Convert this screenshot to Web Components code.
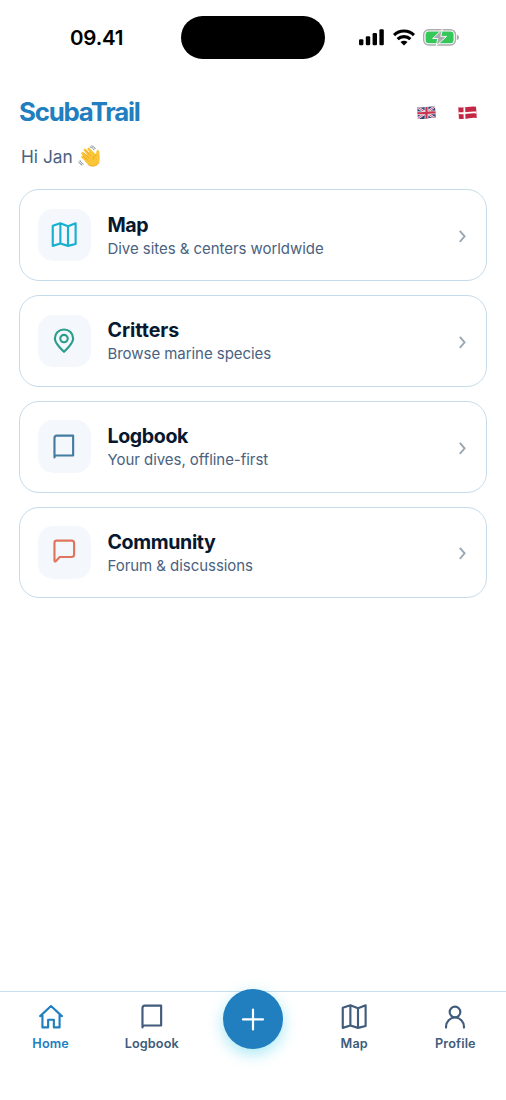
<!DOCTYPE html>
<html lang="en">
<head>
<meta charset="utf-8">
<title>ScubaTrail</title>
<style>
body{margin:0;background:#fff;font-family:Inter,"Liberation Sans",sans-serif;color:#07182f}
</style>
</head>
<body>
<scuba-app></scuba-app>
<script>
const ICONS={
map:'<path d="M2.2 4.7 10.2 2l8 3 8-3v21.7l-8 2-8-2.4-8 2.4zM10.2 2v21.3M18.2 5v20.7"/>',
pin:'<path d="M14 25.6C11.5 23 4.4 17 4.4 11.6a9.6 9.4 0 0 1 19.2 0C23.6 17 16.5 23 14 25.6z"/><circle cx="14" cy="11.7" r="3.9"/>',
book:'<path d="M4 25.2V5Q4 2.4 6.6 2.4H23.6V23.2H6Q4 23.2 4 25.2"/>',
chat:'<path d="M6.3 2.4H22Q24.6 2.4 24.6 5V17Q24.6 19.6 22 19.6H9.5L5.3 24Q4 24.8 4 23V4.7Q4 2.4 6.3 2.4z"/>',
home:'<path d="M2.6 13.4 14 2.8 25.4 13.4M5 11.5V25.2H11V17.2H17V25.2H23V11.5"/>',
user:'<circle cx="14" cy="9" r="5.6"/><path d="M4.6 25.4v-1a9.4 9.6 0 0 1 18.8 0v1"/>'
};
const define=(name,html)=>customElements.define(name,class extends HTMLElement{
  connectedCallback(){
    if(this.shadowRoot)return;
    const t=document.createElement('template');
    t.innerHTML=typeof html==='function'?html(this):html;
    this.attachShadow({mode:'open'}).append(t.content.cloneNode(true));
  }
});
define('line-icon',el=>`<style>:host{display:block;width:28px;height:28px}svg{display:block;fill:none;stroke:currentColor;stroke-width:2.25;stroke-linejoin:round;stroke-linecap:round}</style><svg width="28" height="28" viewBox="-.7 -.4 29.4 29.4">${ICONS[el.getAttribute('name')]}</svg>`);
define('status-bar',`<style>
:host{display:grid;grid-template-columns:181px 144px 181px;height:75px;align-items:start}
time{padding:25px 0 0 70px;font:600 20.5px/25px Inter,sans-serif;letter-spacing:-.2px;color:#000;white-space:nowrap}
.island{margin-top:16px;height:42.5px;border-radius:22px;background:#000}
.sys{display:flex;gap:9px;padding:29px 0 0 33.6px}svg{display:block}
svg:last-child{margin-left:-.6px}
</style><time>09.41</time><div class="island"></div>
<div class="sys"><svg width="25" height="17" viewBox="0 0 25 17"><rect y="10.3" width="4.4" height="6" rx="1.2"/><rect x="6.8" y="7.2" width="4.4" height="9.1" rx="1.2"/><rect x="13.6" y="4" width="4.4" height="12.3" rx="1.2"/><rect x="20.4" y=".2" width="4.4" height="16.1" rx="1.2"/></svg>
<svg width="22" height="17" viewBox="0 0 22 17"><g fill="none" stroke="#000" stroke-width="3.1"><path d="M1 6.1a14.2 14.2 0 0 1 20 0M4.6 10.2a9.2 9.2 0 0 1 12.8 0"/></g><path d="M11 16.6 7.5 13.1a5 5 0 0 1 7 0z"/></svg>
<svg width="37" height="17" viewBox="0 0 37 17"><rect x=".7" y=".8" width="31.8" height="15.2" rx="5" fill="#fff" stroke="#acacb0" stroke-width="1.4"/><rect x="2.6" y="2.6" width="28" height="11.6" rx="3.3" fill="#35c759"/><path d="M34 5.8q2 .5 2 2.6t-2 2.6z" fill="#acacb0"/><path d="M19.4.3 9.6 9.5h5.2l-1.6 7.3 10.4-9.4h-5.8z" fill="#acacb0" stroke="#fff" stroke-width=".9" stroke-linejoin="round"/></svg></div>`);
define('flag-gb',`<style>:host,svg{display:block}</style><svg width="19" height="14" viewBox="0 0 19 14"><defs><clipPath id="c"><path d="M.3 1.3Q5 1.9 9.5 1.1T18 .8Q18.5 6 18.7 11.9 14 11.5 9.8 12.4T.9 12.8Z"/></clipPath></defs><g clip-path="url(#c)"><path fill="#344379" d="M0 0h19v14H0z"/><path d="M0 1 19 13M0 13 18.5 0" stroke="#f0eaf0" stroke-width="2.4"/><path d="M0 1 19 13M0 13 18.5 0" stroke="#c3364d" stroke-width=".8"/><path d="M9.5 0v14M0 7.1Q5 7.5 9.5 6.8T19 6.5" fill="none" stroke="#f0eaf0" stroke-width="3.7"/><path d="M9.5 0v14M0 7.1Q5 7.5 9.5 6.8T19 6.5" fill="none" stroke="#c8344e" stroke-width="2.2"/></g></svg>`);
define('flag-dk',`<style>:host,svg{display:block}</style><svg width="19" height="14" viewBox="0 0 19 14"><defs><clipPath id="c"><path d="M.3 1.3Q5 1.9 9.5 1.1T18 .8Q18.5 6 18.7 11.9 14 11.5 9.8 12.4T.9 12.8Z"/></clipPath></defs><g clip-path="url(#c)"><path fill="#c52643" d="M0 0h19v14H0z"/><path d="M6.3 0l.3 14M0 7.1Q5 7.5 9.5 6.8T19 6.5" fill="none" stroke="#fff" stroke-width="1.8"/></g></svg>`);
define('wave-hand',`<style>:host,svg{display:block}</style><svg width="23" height="23" viewBox="0 0 24 24" fill="none" stroke-linecap="round" stroke-linejoin="round"><path d="M8.7 10 14 5.5l4.5 4.2c1-.8.2-3.2 1.3-4.2 1.4-1 2.5.5 2.5 2.2.1 3.2 1 6.7-.1 10-1.4 4.3-7.2 6-11.3 2.9L7.2 17z" fill="#fac536"/><g stroke="#fac536" stroke-width="2.8"><path d="m14 13-6.8-7.8M16.5 11l-5.3-6.9M12 15.5 4.7 8.7M11 18l-6.2-5.5"/></g><g stroke="#e89b20" stroke-width=".7"><path d="m13 11-4.8-5.2M11.3 13.2 6 8.1M10.3 15.7l-5-4.2M19 10.3c-2.2 1-3.1 2.4-2.8 4.5M10.5 20.5c3.7 3 9.5 1.8 11.5-2.5"/></g><g stroke="#68747b" stroke-width=".9"><path d="M12.8 2c1.7.3 3 1.4 3.8 2.9M14.4.9c1.6.5 2.8 1.5 3.6 3M2.2 16.4c.5 1.6 1.6 2.8 3.2 3.4M1 17.7c.6 1.5 1.5 2.5 3 3.1"/></g></svg>`);
define('app-header',`<style>
:host{display:block;padding:0 19px}
.bar{display:flex;height:75px;align-items:center;justify-content:space-between}
h1{margin:-1px 0 1px;font:700 25.8px/32px Inter,sans-serif;letter-spacing:-1.2px;color:#217ebf}
.flags{display:flex;gap:22px;padding-right:10px}
.hi{display:flex;align-items:center;gap:5.5px;height:26px;margin-top:-7px;padding-left:2px;font-size:17.3px;color:#4a6280}
</style><div class="bar"><h1>ScubaTrail</h1><div class="flags"><flag-gb></flag-gb><flag-dk></flag-dk></div></div><div class="hi"><span>Hi Jan</span><wave-hand></wave-hand></div>`);
define('menu-card',el=>`<style>
:host{display:flex;box-sizing:border-box;height:91.8px;border:1.3px solid #c6dbea;border-radius:20px;background:#fff;align-items:center;padding:0 18px;gap:17px}
.tile{width:52.5px;height:52.5px;border-radius:15px;background:#f4f8fd;display:grid;place-items:center;color:var(--tint)}
.text{flex:1;display:flex;flex-direction:column;padding-top:1px}
.t{font-size:19.6px;line-height:25px;font-weight:700;letter-spacing:var(--track,-.38px);color:#07182f}
.s{font-size:15px;line-height:21px;letter-spacing:-.05px;color:#4a6280}
svg{display:block;margin-top:2px}
</style><div class="tile"><line-icon name="${el.getAttribute('icon')}"></line-icon></div><div class="text"><span class="t"><slot name="title"></slot></span><span class="s"><slot></slot></span></div>
<svg width="12" height="16" viewBox="0 0 12 16"><path d="m3.8 2.8 4.8 5.5-4.8 5.5" fill="none" stroke="#9aa8b4" stroke-width="1.9"/></svg>`);
define('tab-item',el=>`<style>
:host{display:flex;flex-direction:column;align-items:center;padding-top:11px;color:#405b7b}
:host([active]){color:#217ebf}
span{margin-top:4.5px;font-size:12.7px;line-height:17px;font-weight:600;letter-spacing:.12px}
</style><line-icon name="${el.getAttribute('icon')}"></line-icon><span><slot></slot></span>`);
define('add-button',`<style>
:host{display:block;width:60px;height:60px;margin:-3px auto 0;border-radius:50%;background:#217ebf;box-shadow:0 5px 15px rgba(0,188,225,.35)}
svg{display:block}</style><svg width="60" height="60" viewBox="0 0 60 60"><path d="M30 20.5v20M20 30.4h20" stroke="#fff" stroke-width="2.2" stroke-linecap="round"/></svg>`);
define('tab-bar',`<style>:host{display:grid;grid-template-columns:repeat(5,1fr);box-sizing:border-box;height:109.5px;border-top:1.5px solid #c8dded;background:#fff}</style><slot></slot>`);
define('scuba-app',`<style>
:host{display:flex;flex-direction:column;width:506px;height:1100px;overflow:hidden}
main{display:flex;flex-direction:column;gap:14px;padding:20.2px 19px 0;flex:1}
</style><status-bar></status-bar><app-header></app-header><main>
<menu-card icon="map" style="--tint:#18b0cf"><span slot="title">Map</span>Dive sites &amp; centers worldwide</menu-card>
<menu-card icon="pin" style="--tint:#2a9d8a;--track:-.05px"><span slot="title">Critters</span>Browse marine species</menu-card>
<menu-card icon="book" style="--tint:#447ba0"><span slot="title">Logbook</span>Your dives, offline-first</menu-card>
<menu-card icon="chat" style="--tint:#df755d"><span slot="title">Community</span>Forum &amp; discussions</menu-card>
</main><tab-bar><tab-item icon="home" active>Home</tab-item><tab-item icon="book">Logbook</tab-item><add-button></add-button><tab-item icon="map">Map</tab-item><tab-item icon="user">Profile</tab-item></tab-bar>`);
</script>
</body>
</html>
